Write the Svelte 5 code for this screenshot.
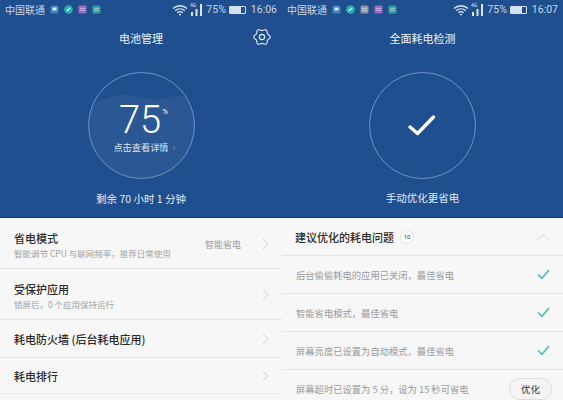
<script>
	const stats = [
		{ c: '#3f82c4', kind: 'box' },
		{ c: '#2bb3b0', kind: 'pen' },
		{ c: '#a565c9', kind: 'lines' },
		{ c: '#2aa5a8', kind: 'lines' }
	];
	const statsRight = [stats[0], stats[1], { c: '#8c9aa8', kind: 'lines' }, stats[2], stats[3]];
	const modes = [
		{ title: '省电模式', sub: '智能调节 CPU 与联网频率，推荐日常使用', value: '智能省电', cls: 'tall' },
		{ title: '受保护应用', sub: '锁屏后，0 个应用保持运行', cls: 'tall' },
		{ title: '耗电防火墙 (后台耗电应用)', cls: 'mid' },
		{ title: '耗电排行', cls: 'short' }
	];
	const checks = ['后台偷偷耗电的应用已关闭，最佳省电', '智能省电模式，最佳省电', '屏幕亮度已设置为自动模式，最佳省电'];

	// six soft lobes, like the settings cog in the reference
	let gear = '';
	for (let i = 0; i < 72; i++) {
		const a = (i / 72) * Math.PI * 2;
		const r = 7.3 + 0.9 * Math.cos(6 * a);
		gear += (i ? 'L' : 'M') + (9 + r * Math.cos(a)).toFixed(2) + ' ' + (9 + r * Math.sin(a)).toFixed(2);
	}
	gear += 'Z';
</script>

{#snippet status(items, time)}
	<div class="status">
		<span class="carrier">中国联通</span>
		<div class="notes">
			{#each items as n}
				<svg width="9" height="9" viewBox="0 0 9 9">
					{#if n.kind === 'pen'}
						<circle cx="4.500" cy="4.500" r="4.300" fill={n.c} />
						<path d="M2.800 6.200L6.200 2.800" stroke="#e6fbfa" stroke-width="1.200" />
					{:else}
						<rect x=".5" y=".5" width="8" height="8" rx="1.500" fill={n.c} />
						{#if n.kind === 'box'}
							<rect x="2.500" y="2.500" width="4" height="3" fill="#dcecfb" />
						{:else}
							<path d="M2 3.600h5M2 5.400h5" stroke="#e4dff0" stroke-width=".8" opacity=".8" />
						{/if}
					{/if}
				</svg>
			{/each}
		</div>
		<div class="spacer"></div>
		<svg width="16" height="12" viewBox="0 0 16 12" fill="none" stroke="#dce6f2" stroke-width="1.300">
			<path d="M1 4.500C5 .8 11 .8 15 4.500M3.200 6.700c2.800-2.400 6.800-2.400 9.600 0M5.300 8.800c1.600-1.300 3.800-1.300 5.400 0" />
			<circle cx="8" cy="10.500" r="1" fill="#dce6f2" stroke="none" />
		</svg>
		<svg class="signal" width="13" height="15" viewBox="0 0 13 15" fill="#dce6f2">
			<text x="0" y="5" class="net">4G</text>
			<rect x="1" y="10" width="2" height="4" />
			<rect x="5.500" y="7" width="2" height="7" />
			<rect x="10" y="2" width="2" height="12" />
		</svg>
		<span class="pct">75%</span>
		<div class="battery"><b></b></div>
		<span>{time}</span>
	</div>
{/snippet}

{#snippet chevron()}
	<svg class="chevron" width="7" height="12" viewBox="0 0 7 12" fill="none" stroke="#cfcfcf" stroke-width="1">
		<path d="M1 1l5 5-5 5" />
	</svg>
{/snippet}

<div class="screens">
	<section class="screen">
		<div class="hero">
			{@render status(stats, '16:06')}
			<header class="title">
				<span>电池管理</span>
				<svg class="gear" width="18" height="18" viewBox="0 0 18 18" fill="none" stroke="#eaf0f7" stroke-width="1.100">
					<path d={gear} />
					<circle cx="9" cy="9" r="2.600" />
				</svg>
			</header>
			<div class="dial">
				<svg class="wave" width="107" height="107" viewBox="0 0 107 107">
					<path d="M0 36C12 30 24 21 40 23c16 2 24 7 38 3 12-3 20-2 29 2v79H0z" fill="#fff" opacity=".055" />
				</svg>
				<div class="reading">
					<span class="num">75</span><span class="unit">%</span>
				</div>
				<div class="detail">点击查看详情<span class="gt">›</span></div>
			</div>
			<p class="caption">剩余 70 小时 1 分钟</p>
		</div>
		<div class="list">
			{#each modes as m}
				<div class="row {m.cls}">
					<div class="text">
						<div class="main">{m.title}</div>
						{#if m.sub}<div class="sub">{m.sub}</div>{/if}
					</div>
					{#if m.value}<span class="value">{m.value}</span>{/if}
					{@render chevron()}
				</div>
			{/each}
		</div>
	</section>

	<section class="screen">
		<div class="hero">
			{@render status(statsRight, '16:07')}
			<header class="title"><span>全面耗电检测</span></header>
			<div class="dial">
				<svg width="34" height="26" viewBox="0 0 34 26" fill="none" stroke="#fff" stroke-width="3.400" stroke-linecap="round" stroke-linejoin="round">
					<path d="M4 14l7.500 6.500L27.500 4" />
				</svg>
			</div>
			<p class="caption">手动优化更省电</p>
		</div>
		<div class="list">
			<div class="row head">
				<div class="main">建议优化的耗电问题</div>
				<span class="badge">10</span>
				<svg class="up" width="14" height="8" viewBox="0 0 14 8" fill="none" stroke="#d6d6d6" stroke-width="1">
					<path d="M1 7l6-5.500L13 7" />
				</svg>
			</div>
			{#each checks as c}
				<div class="row check">
					<span class="issue">{c}</span>
					<svg width="13" height="11" viewBox="0 0 13 11" fill="none" stroke="#45bcb9" stroke-width="1.500">
						<path d="M1 5.500l4 3.800L12 1" />
					</svg>
				</div>
			{/each}
			<div class="row last">
				<span class="issue">屏幕超时已设置为 5 分，设为 15 秒可省电</span>
				<button>优化</button>
			</div>
		</div>
	</section>
</div>

<style>
	:global(body) {
		background: #f6f6f6;
	}

	.screens {
		display: grid;
		grid-template-columns: 282px 281px;
		height: 400px;
		overflow: hidden;
		font-family: 'Noto Sans CJK SC', 'Liberation Sans', sans-serif;
	}

	.hero {
		height: 218px;
		box-sizing: border-box;
		background: #1f4f8e;
		border-bottom: 1px solid #16355f;
		color: #fff;
		display: flex;
		flex-direction: column;
		align-items: center;
	}

	.status {
		align-self: stretch;
		display: flex;
		align-items: center;
		height: 19px;
		padding: 0 5px;
		font-size: 10.500px;
		color: #c9d6e6;
		font-family: 'Roboto', 'Noto Sans CJK SC', sans-serif;
	}

	.carrier {
		font-size: 10px;
	}

	.notes {
		display: flex;
		gap: 5px;
		margin-left: 5px;
	}

	.spacer {
		flex: 1;
	}

	.signal {
		margin-left: 2px;
	}

	.net {
		font: 5px 'Roboto', sans-serif;
	}

	.pct {
		margin-left: 3px;
	}

	.battery {
		width: 17px;
		height: 8px;
		margin: 0 5px 0 3px;
		border: 1px solid #d5e0ee;
		border-radius: 1px;
		box-sizing: border-box;
	}

	.battery b {
		display: block;
		width: 75%;
		height: 100%;
		background: #d5e0ee;
	}

	.title {
		position: relative;
		align-self: stretch;
		height: 38px;
		display: flex;
		align-items: center;
		justify-content: center;
		font-size: 11px;
		color: #eef3f9;
	}

	.gear {
		position: absolute;
		right: 11px;
		top: 9px;
	}

	.dial {
		position: relative;
		overflow: hidden;
		width: 107px;
		height: 107px;
		margin-top: 15px;
		box-sizing: border-box;
		border: 1.500px solid #6f93c0;
		border-radius: 50%;
		display: flex;
		flex-direction: column;
		align-items: center;
		justify-content: center;
	}

	.wave {
		position: absolute;
		left: -1.500px;
		top: -1.500px;
	}

	.reading {
		position: relative;
		display: flex;
		align-items: flex-start;
		margin-top: 5px;
		margin-left: 5px;
		font-family: 'Roboto', sans-serif;
	}

	.num {
		font-size: 38px;
		font-weight: 300;
		line-height: 36px;
	}

	.unit {
		font-size: 8px;
		line-height: 8px;
		margin-top: 6px;
		margin-left: 1px;
	}

	.detail {
		position: relative;
		font-size: 9.200px;
		line-height: 14px;
		margin-top: 2px;
		color: #dbe5f1;
	}

	.gt {
		position: absolute;
		left: 100%;
		margin-left: 4px;
		color: #7f9fc7;
	}

	.caption {
		margin: 12px 0 0;
		font-size: 10.500px;
		line-height: 16px;
		color: #e4ebf4;
	}

	.screen:last-child .caption {
		margin-top: 11px;
	}

	.list {
		height: 182px;
		overflow: hidden;
	}

	.row {
		display: flex;
		align-items: center;
		box-sizing: border-box;
		padding: 0 14px;
		border-bottom: 1px solid #e6e6e6;
		background: #f7f7f7;
	}

	.tall {
		height: 51px;
		padding-top: 2px;
	}

	.mid {
		height: 38px;
	}

	.short {
		height: 36px;
	}

	.text {
		flex: 1;
	}

	.main {
		font-size: 11px;
		font-weight: 500;
		line-height: 16px;
		color: #2b2b2b;
	}

	.sub {
		font-size: 8.500px;
		line-height: 12px;
		margin-top: 1px;
		color: #a3a3a3;
	}

	.value {
		font-size: 9px;
		color: #999;
		margin-right: 21px;
	}

	.chevron {
		margin-right: -1px;
	}

	.head {
		height: 38px;
		gap: 6px;
		padding-left: 13px;
	}

	.badge {
		width: 14px;
		height: 14px;
		box-sizing: border-box;
		border-radius: 50%;
		border: 1px solid #e2e2e2;
		background: #fff;
		font-size: 6px;
		color: #333;
		display: flex;
		align-items: center;
		justify-content: center;
		font-family: 'Roboto', sans-serif;
	}

	.up {
		margin-left: auto;
		margin-right: -1px;
	}

	.check {
		height: 38px;
		justify-content: space-between;
		padding-right: 13px;
	}

	.issue {
		font-size: 9.300px;
		color: #9b9b9b;
	}

	.last {
		height: 38px;
		justify-content: space-between;
		border: 0;
		padding-right: 11px;
	}

	button {
		width: 43px;
		height: 22px;
		padding: 0;
		border: 1px solid #dcdcdc;
		border-radius: 11px;
		background: #f4f4f4;
		font: 9.500px 'Noto Sans CJK SC', sans-serif;
		color: #333;
	}
</style>
